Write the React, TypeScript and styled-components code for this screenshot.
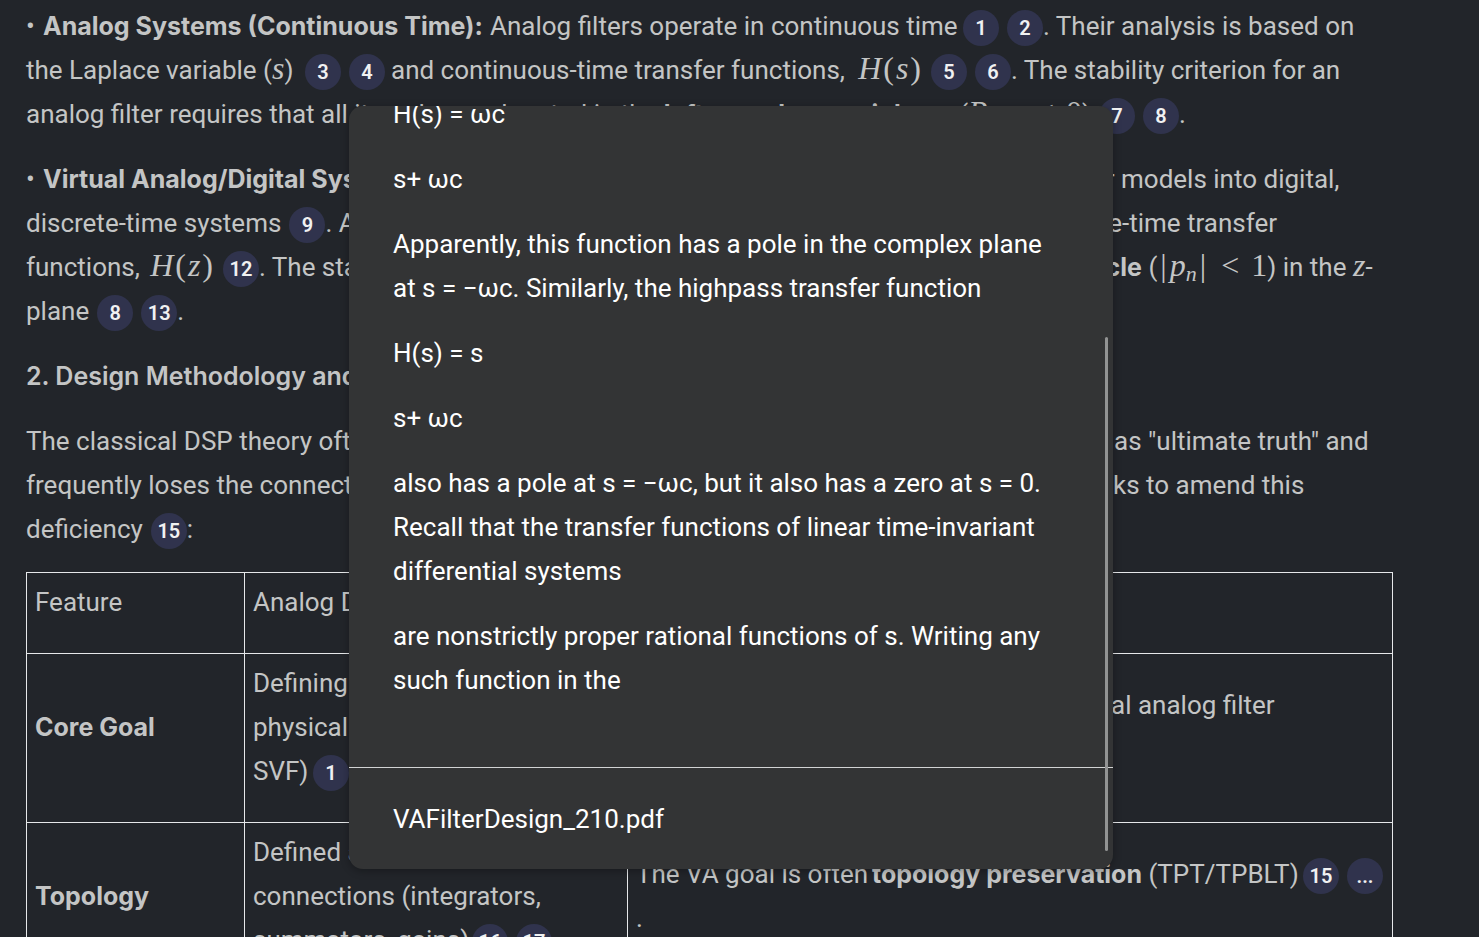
import React from 'react';
import styled, { createGlobalStyle } from 'styled-components';

const GlobalStyle = createGlobalStyle`
  *, *::before, *::after { box-sizing: border-box; }
  body {
    margin: 0;
    background: #22252a;
    color: #c4c5c5;
    font: 400 26px/44px Roboto, "Liberation Sans", sans-serif;
  }
`;

const Page = styled.main`
  position: relative;
  height: 100vh;
  overflow: hidden;
  padding: 4px 86px 0 26px;
`;

const Paragraph = styled.p`
  margin: 0 0 21px;
`;

const Heading = styled.h3`
  margin: 0 0 21px;
  font: 600 25px/44px Inter, Roboto, sans-serif;
`;

const Strong = styled.strong`
  font: 700 25px/1 Inter, Roboto, sans-serif;
`;

const Bullet = styled.span`
  display: inline-block;
  width: 17px;
`;

const Line = styled.span`
  display: flex;
  height: 44px;
  white-space: pre;
`;

const Lead = styled.span<{ $width: number }>`
  display: flex;
  justify-content: space-between;
  flex: 0 0 ${(p) => p.$width}px;
  min-width: 0;
`;

const MathText = styled.i`
  font: italic 400 32px/1 "Liberation Serif", serif;
`;

const MathSign = styled.span<{ $gap?: number }>`
  padding: 0 ${(p) => p.$gap ?? 0}px;
  font: 400 32px/1 "Liberation Serif", serif;
`;

const Subscript = styled.sub`
  font-size: 22px;
  line-height: 1;
  vertical-align: -5px;
`;

const CiteButton = styled.button`
  display: inline-flex;
  align-items: center;
  justify-content: center;
  width: 36px;
  height: 36px;
  margin: 0 0 0 8px;
  padding: 0;
  border: 0;
  border-radius: 50%;
  background: #30334d;
  color: #f0f1f2;
  font: 600 20px/1 Roboto, "Liberation Sans", sans-serif;
  vertical-align: middle;
  cursor: pointer;
`;

const Table = styled.table`
  width: 100%;
  table-layout: fixed;
  border-collapse: collapse;
`;

const FeatureCol = styled.col`
  width: 218px;
`;

const AnalogCol = styled.col`
  width: 383px;
`;

const Cell = styled.td`
  padding: 7px 8px 8px;
  border: 1px solid #e6e8ea;
  vertical-align: middle;
`;

const HeaderCell = styled(Cell).attrs({ as: 'th', scope: 'col' })`
  font-weight: 400;
  text-align: left;
`;

const RowHeader = styled(Cell).attrs({ as: 'th', scope: 'row' })`
  text-align: left;
`;

const Popup = styled.aside`
  position: absolute;
  top: 106px;
  bottom: 68px;
  left: 349px;
  right: 366px;
  border-radius: 14px;
  background: #333435;
  color: #ffffff;
  box-shadow: 0 2px 8px rgba(0, 0, 0, 0.3);
`;

const PopupScroll = styled.div`
  display: flex;
  flex-direction: column;
  justify-content: flex-end;
  height: 100%;
  overflow: hidden;
  border-radius: 14px;
`;

const Excerpt = styled.div`
  padding: 0 60px 44px 44px;
`;

const Source = styled.footer`
  padding: 29px 44px 28px;
  border-top: 1px solid #d2d3d3;
`;

const ScrollThumb = styled.div`
  position: absolute;
  top: 231px;
  right: 5px;
  bottom: 18px;
  width: 3px;
  border-radius: 2px;
  background: #929393;
`;

const Cite = ({ n }: { n: string }) => (
  <CiteButton type="button" aria-label={`Citation ${n}`}>{n}</CiteButton>
);

const Transfer = ({ variable }: { variable: string }) => (
  <>
    <MathText>H</MathText>
    <MathSign $gap={2}>(</MathSign>
    <MathText>{variable}</MathText>
    <MathSign $gap={2}>)</MathSign>
  </>
);

const excerpt = [
  ['H(s) = ωc'],
  ['s+ ωc'],
  ['Apparently, this function has a pole in the complex plane', 'at s = −ωc. Similarly, the highpass transfer function'],
  ['H(s) = s'],
  ['s+ ωc'],
  [
    'also has a pole at s = −ωc, but it also has a zero at s = 0.',
    'Recall that the transfer functions of linear time-invariant',
    'differential systems',
  ],
  ['are nonstrictly proper rational functions of s. Writing any', 'such function in the'],
];

export default function App() {
  return (
    <Page>
      <GlobalStyle />
      <Paragraph>
        <Line>
          <Lead $width={464}><span><Bullet>•</Bullet><Strong>Analog Systems (Continuous Time):</Strong></span></Lead>
          <Lead $width={465}><span>Analog filters operate in continuous time</span></Lead>
          <span><Cite n="1" /><Cite n="2" />. Their analysis is based on</span>
        </Line>
        <Line>
          <Lead $width={271}><span>the Laplace variable (<MathText>s</MathText>)</span></Lead>
          <Lead $width={94}><span><Cite n="3" /><Cite n="4" /></span></Lead>
          <Lead $width={532}>
            <span>and continuous-time transfer functions,</span>
            <span><Transfer variable="s" /></span>
          </Lead>
          <span><Cite n="5" /><Cite n="6" />. The stability criterion for an</span>
        </Line>
        <Line>
          <Lead $width={1065}>
            <span>analog filter requires that all its poles are located in the <Strong>left complex semiplane</Strong></span>
            <span>(<MathText>R</MathText>e <MathText>p</MathText><MathSign $gap={12}>&lt;</MathSign><MathSign>0</MathSign>)</span>
          </Lead>
          <span><Cite n="7" /><Cite n="8" />.</span>
        </Line>
      </Paragraph>
      <Paragraph>
        <Line>
          <Lead $width={1095}>
            <span><Bullet>•</Bullet><Strong>Virtual Analog/Digital Systems:</Strong> These convert</span>
            <span>linear </span>
          </Lead>
          <span>models into digital,</span>
        </Line>
        <Line>
          <Lead $width={1096}>
            <span>discrete-time systems<Cite n="9" />. Analysis uses</span>
            <span>discrete</span>
          </Lead>
          <span>-time transfer</span>
        </Line>
        <Line>
          <Lead $width={189}>
            <span>functions,</span>
            <span><Transfer variable="z" /></span>
          </Lead>
          <Lead $width={927}>
            <span><Cite n="12" />. The stability criterion</span>
            <span><Strong>unit circle</Strong></span>
          </Lead>
          <span>
            {' '}(<MathSign $gap={3}>|</MathSign><MathText>p<Subscript>n</Subscript></MathText><MathSign $gap={3}>|</MathSign><MathSign $gap={12}>&lt;</MathSign><MathSign>1</MathSign>) in the <MathText>z</MathText>-
          </span>
        </Line>
        <Line><span>plane<Cite n="8" /><Cite n="13" />.</span></Line>
      </Paragraph>
      <Heading>2. Design Methodology and Philosophy</Heading>
      <Paragraph>
        <Line>
          <Lead $width={1088}><span>The classical DSP theory often treats the discrete-time form</span></Lead>
          <span>as "ultimate truth" and</span>
        </Line>
        <Line>
          <Lead $width={1087}>
            <span>frequently loses the connection to the analog world.</span>
            <span>VA see</span>
          </Lead>
          <span>ks to amend this</span>
        </Line>
        <Line><span>deficiency<Cite n="15" />:</span></Line>
      </Paragraph>
      <Table>
        <colgroup><FeatureCol /><AnalogCol /><col /></colgroup>
        <thead>
          <tr>
            <HeaderCell><Paragraph as="div">Feature</Paragraph></HeaderCell>
            <HeaderCell><Paragraph as="div">Analog Design</Paragraph></HeaderCell>
            <HeaderCell><Paragraph as="div">Virtual Analog</Paragraph></HeaderCell>
          </tr>
        </thead>
        <tbody>
          <tr>
            <RowHeader><Paragraph><Strong>Core Goal</Strong></Paragraph></RowHeader>
            <Cell>
              <Paragraph>
                <Line>Defining the ideal</Line>
                <Line>physical system (Moog,</Line>
                <Line>
                  <Lead $width={52}>SVF)</Lead>
                  <span><Cite n="1" /></span>
                </Line>
              </Paragraph>
            </Cell>
            <Cell>
              <Paragraph>
                <Line>
                  <Lead $width={475}><span>Emulating the behavior of the</span><span>origin</span></Lead>
                  <span>al analog filter</span>
                </Line>
                <Line>in software</Line>
              </Paragraph>
            </Cell>
          </tr>
          <tr>
            <RowHeader><Paragraph><Strong>Topology</Strong></Paragraph></RowHeader>
            <Cell>
              <Paragraph>
                <Line>Defined as</Line>
                <Line>connections (integrators,</Line>
                <Line>
                  <Lead $width={211}>summators, gains)</Lead>
                  <span><Cite n="16" /><Cite n="17" /></span>
                </Line>
              </Paragraph>
            </Cell>
            <Cell>
              <Paragraph>
                <Line>
                  <Lead $width={236}>The VA goal is often</Lead>
                  <Lead $width={423}><span><Strong>topology preservation</Strong> (TPT/TPBLT)</span></Lead>
                  <span><Cite n="15" /><Cite n="..." /></span>
                </Line>
                <Line>.</Line>
              </Paragraph>
            </Cell>
          </tr>
        </tbody>
      </Table>
      <Popup>
        <PopupScroll>
          <Excerpt>
            {excerpt.map((lines, i) => (
              <Paragraph key={i}>
                {lines.map((text) => <Line key={text}>{text}</Line>)}
              </Paragraph>
            ))}
          </Excerpt>
          <Source>VAFilterDesign_210.pdf</Source>
        </PopupScroll>
        <ScrollThumb />
      </Popup>
    </Page>
  );
}
